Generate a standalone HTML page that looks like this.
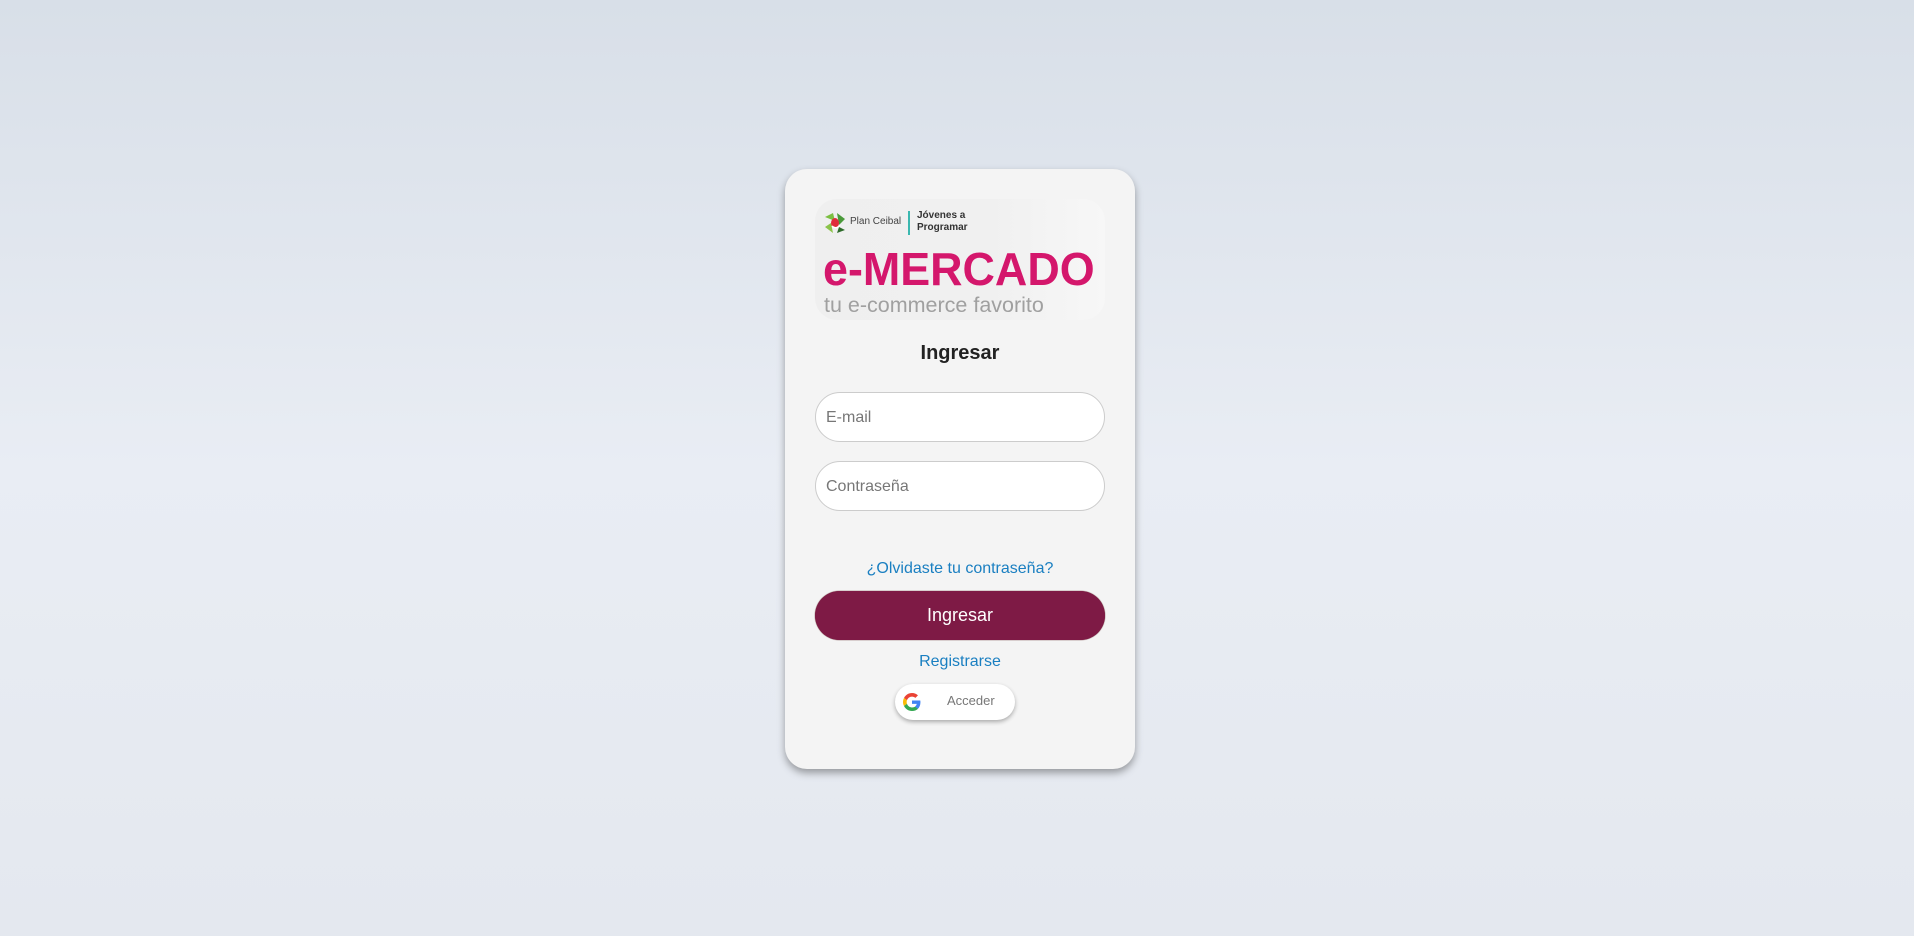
<!DOCTYPE html>
<html><head><meta charset="utf-8">
<style>
html,body{margin:0;padding:0;width:1914px;height:936px;overflow:hidden}
body{background:linear-gradient(180deg,#d8dfe8 0%,#e9edf4 50%,#e4e8ef 100%);font-family:"Liberation Sans",sans-serif;position:relative}
.card{position:absolute;left:785px;top:169px;width:350px;height:600px;background:#f4f4f4;border-radius:22px;box-shadow:0 4px 8px rgba(0,0,0,.35)}
.logo{position:absolute;left:30px;top:30px;width:290px;height:121px;border-radius:22px;background:linear-gradient(90deg,#efefef 0%,#f0f0f0 60%,#f7f7f7 100%)}
.pc{position:absolute;left:35px;top:17px;font-size:10px;color:#444;white-space:nowrap}
.jp{position:absolute;left:102px;top:11px;font-size:10px;font-weight:bold;color:#333;line-height:12px;white-space:nowrap}
.bar{position:absolute;left:93px;top:12px;width:2px;height:24px;background:#3bb8b0}
.em{position:absolute;left:8px;top:44px;font-size:46px;font-weight:bold;color:#d4176c;transform:scaleX(.975);transform-origin:left;line-height:52px;white-space:nowrap}
.tu{position:absolute;left:9px;top:93px;font-size:21.5px;color:#a0a0a0;line-height:26px;white-space:nowrap}
h1{position:absolute;left:0;width:350px;top:171px;margin:0;text-align:center;font-size:20px;line-height:26px;font-weight:bold;color:#222}
.inp{position:absolute;left:30px;width:288px;height:48px;border:1px solid #ccc;border-radius:25px;background:#fff}
.inp span{position:absolute;left:10px;top:16px;font-size:16px;color:#777}
.link{position:absolute;left:0;width:350px;text-align:center;color:#1a7fc1;font-size:16px;line-height:20px}
.btn{position:absolute;left:30px;top:422px;width:290px;height:49px;border-radius:25px;background:#7e1a45;color:#fff;text-align:center;line-height:49px;font-size:18px;box-shadow:0 0 1px #400}
.g{position:absolute;left:110px;top:515px;width:120px;height:36px;border-radius:18px;background:#fff;box-shadow:0 2px 4px rgba(0,0,0,.3)}
.g span{position:absolute;left:52px;top:9px;font-size:13px;color:#777}
</style></head><body>
<div class="card">
 <div class="logo">
  <svg style="position:absolute;left:8px;top:12px" width="24" height="24" viewBox="0 0 24 24"><path d="M2 6 L10 2 L12 10Z" fill="#7cbf42"/><path d="M14 2 L22 8 L16 14Z" fill="#4a9a3a"/><path d="M2 16 L8 12 L10 22Z" fill="#8bc34a"/><path d="M16 16 L22 19 L14 22Z" fill="#2e6b2a"/><ellipse cx="12" cy="12" rx="4" ry="5" fill="#e02b3c"/><path d="M9 15 Q13 19 17 14" stroke="#fff" stroke-width="1.5" fill="none"/></svg>
  <div class="pc">Plan Ceibal</div>
  <div class="bar"></div>
  <div class="jp">Jóvenes a<br>Programar</div>
  <div class="em">e-MERCADO</div>
  <div class="tu">tu e-commerce favorito</div>
 </div>
 <h1>Ingresar</h1>
 <div class="inp" style="top:223px"><span>E-mail</span></div>
 <div class="inp" style="top:292px"><span>Contraseña</span></div>
 <div class="link" style="top:390px">¿Olvidaste tu contraseña?</div>
 <div class="btn">Ingresar</div>
 <div class="link" style="top:483px">Registrarse</div>
 <div class="g">
  <svg style="position:absolute;left:8px;top:9px" width="18" height="18" viewBox="0 0 48 48"><path fill="#EA4335" d="M24 9.5c3.5 0 6.6 1.2 9.1 3.6l6.8-6.8C35.8 2.4 30.3 0 24 0 14.6 0 6.6 5.4 2.7 13.3l7.9 6.1C12.5 13.6 17.8 9.5 24 9.5z"/><path fill="#4285F4" d="M46.5 24.5c0-1.600-.1-3.1-.4-4.5H24v9h12.7c-.6 3-2.3 5.5-4.8 7.2l7.7 6c4.5-4.2 6.9-10.3 6.9-17.7z"/><path fill="#FBBC05" d="M10.5 28.6c-.5-1.4-.8-3-.8-4.6s.3-3.2.8-4.6l-7.9-6.1C1 16.5 0 20.1 0 24s1 7.5 2.7 10.7l7.8-6.1z"/><path fill="#34A853" d="M24 48c6.5 0 11.9-2.1 15.900-5.8l-7.7-6c-2.2 1.5-5 2.3-8.2 2.3-6.2 0-11.5-4.2-13.4-9.9l-7.9 6.1C6.6 42.6 14.6 48 24 48z"/></svg>
  <span>Acceder</span>
 </div>
</div>
</body></html>
